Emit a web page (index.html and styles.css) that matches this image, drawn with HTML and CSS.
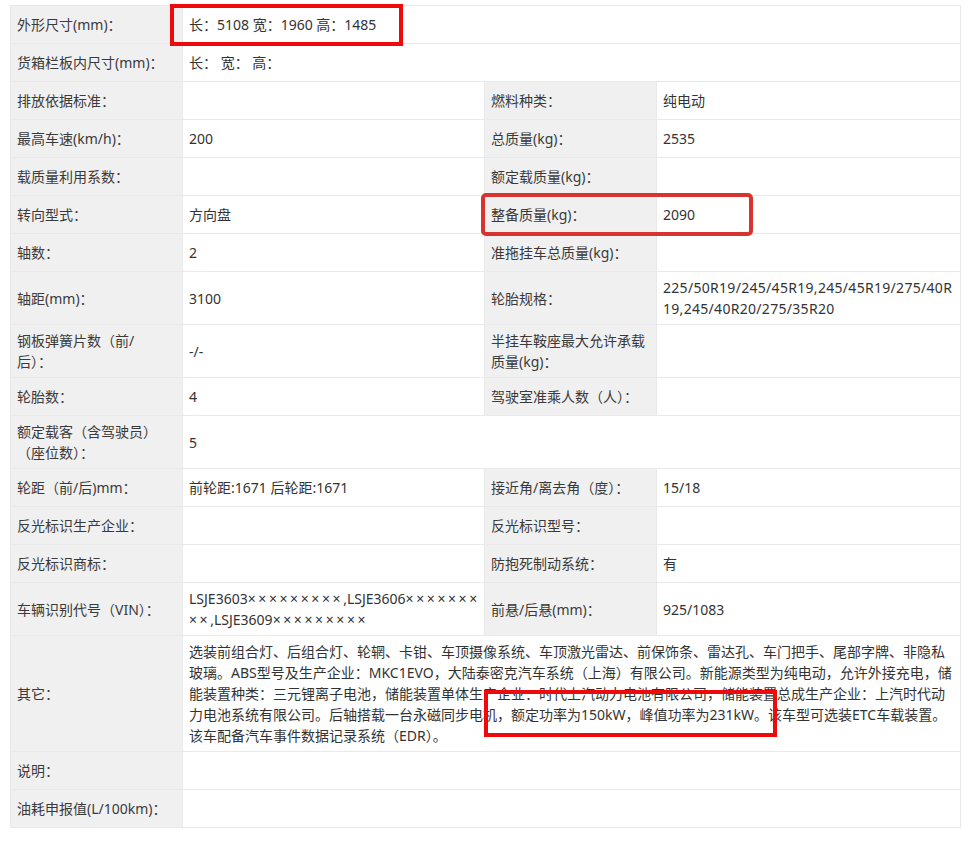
FILE: index.html
```html
<!DOCTYPE html>
<html lang="zh-CN">
<head>
<meta charset="utf-8">
<title>车辆参数</title>
<link rel="stylesheet" href="styles.css">
</head>
<body>
<div class="page">
  <table class="spec">
    <colgroup>
      <col class="c-label"><col class="c-value"><col class="c-label"><col class="c-value2">
    </colgroup>
    <tbody>
      <tr><td class="lb">外形尺寸(mm)：</td><td colspan="3">长：5108 宽：1960 高：1485</td></tr>
      <tr><td class="lb">货箱栏板内尺寸(mm)：</td><td colspan="3">长： 宽： 高：</td></tr>
      <tr><td class="lb">排放依据标准：</td><td></td><td class="lb">燃料种类：</td><td>纯电动</td></tr>
      <tr><td class="lb">最高车速(km/h)：</td><td>200</td><td class="lb">总质量(kg)：</td><td>2535</td></tr>
      <tr><td class="lb">载质量利用系数：</td><td></td><td class="lb">额定载质量(kg)：</td><td></td></tr>
      <tr><td class="lb">转向型式：</td><td>方向盘</td><td class="lb">整备质量(kg)：</td><td>2090</td></tr>
      <tr><td class="lb">轴数：</td><td>2</td><td class="lb">准拖挂车总质量(kg)：</td><td></td></tr>
      <tr><td class="lb">轴距(mm)：</td><td>3100</td><td class="lb">轮胎规格：</td><td class="wrap tire">225/50R19/245/45R19,245/45R19/275/40R<br>19,245/40R20/275/35R20</td></tr>
      <tr><td class="lb">钢板弹簧片数（前/<br>后）：</td><td>-/-</td><td class="lb">半挂车鞍座最大允许承载<br>质量(kg)：</td><td></td></tr>
      <tr><td class="lb">轮胎数：</td><td>4</td><td class="lb">驾驶室准乘人数（人）：</td><td></td></tr>
      <tr><td class="lb">额定载客（含驾驶员）<br>（座位数）：</td><td colspan="3">5</td></tr>
      <tr><td class="lb">轮距（前/后)mm：</td><td>前轮距:1671 后轮距:1671</td><td class="lb">接近角/离去角（度）：</td><td>15/18</td></tr>
      <tr><td class="lb">反光标识生产企业：</td><td></td><td class="lb">反光标识型号：</td><td></td></tr>
      <tr><td class="lb">反光标识商标：</td><td></td><td class="lb">防抱死制动系统：</td><td>有</td></tr>
      <tr><td class="lb">车辆识别代号（VIN）：</td><td class="wrap vin">LSJE3603<span class="x">×××××××××</span>,LSJE3606<span class="x">×××××××</span><br><span class="x">××</span>,LSJE3609<span class="x">×××××××××</span></td><td class="lb">前悬/后悬(mm)：</td><td>925/1083</td></tr>
      <tr><td class="lb">其它：</td><td colspan="3" class="other">选装前组合灯、后组合灯、轮辋、卡钳、车顶摄像系统、车顶激光雷达、前保饰条、雷达孔、车门把手、尾部字牌、非隐私<br>玻璃。ABS型号及生产企业：MKC1EVO，大陆泰密克汽车系统（上海）有限公司。新能源类型为纯电动，允许外接充电，储<br>能装置种类：三元锂离子电池，储能装置单体生产企业：时代上汽动力电池有限公司，储能装置总成生产企业：上汽时代动<br>力电池系统有限公司。后轴搭载一台永磁同步电机，额定功率为150kW，峰值功率为231kW。该车型可选装ETC车载装置。<br>该车配备汽车事件数据记录系统（EDR）。</td></tr>
      <tr><td class="lb">说明：</td><td colspan="3"></td></tr>
      <tr><td class="lb">油耗申报值(L/100km)：</td><td colspan="3"></td></tr>
    </tbody>
  </table>
  <div class="mark mark-size"></div>
  <div class="mark mark-mass"></div>
  <div class="mark mark-power"></div>
</div>
</body>
</html>
```
FILE: styles.css
```css
html, body {
  margin: 0;
  padding: 0;
  background: #ffffff;
}

.page {
  position: relative;
  width: 974px;
  height: 842px;
  padding: 5px 0 0 10px;
  box-sizing: border-box;
}

.spec {
  border-collapse: collapse;
  table-layout: fixed;
  width: 950px;
  font-family: "Noto Sans", "Noto Sans CJK SC", sans-serif;
  font-size: 14px;
  line-height: 21px;
  color: #333333;
}

.c-label { width: 172px; }
.c-value { width: 302px; }
.c-value2 { width: 304px; }

.spec tr { height: 38px; }

.spec td {
  border: 1px solid #e9e9e9;
  padding: 5px 6px;
  vertical-align: middle;
  background: #ffffff;
  white-space: nowrap;
}

.spec td.lb {
  background: #f0f0f0;
  color: #3a3a3a;
}

.spec td.tire {
  letter-spacing: 0.3px;
}

.spec td.vin {
  overflow: hidden;
}

.spec td.vin .x {
  letter-spacing: 2.6px;
}

.mark {
  position: absolute;
  box-sizing: border-box;
  border: 4px solid #ee0a0a;
  pointer-events: none;
}

.mark-size {
  left: 170px;
  top: 4px;
  width: 233px;
  height: 42px;
}

.mark-mass {
  left: 481px;
  top: 193px;
  width: 272px;
  height: 43px;
  border-color: #d7332f;
  border-radius: 5px;
}

.mark-power {
  left: 484px;
  top: 690px;
  width: 293px;
  height: 47px;
}
```
